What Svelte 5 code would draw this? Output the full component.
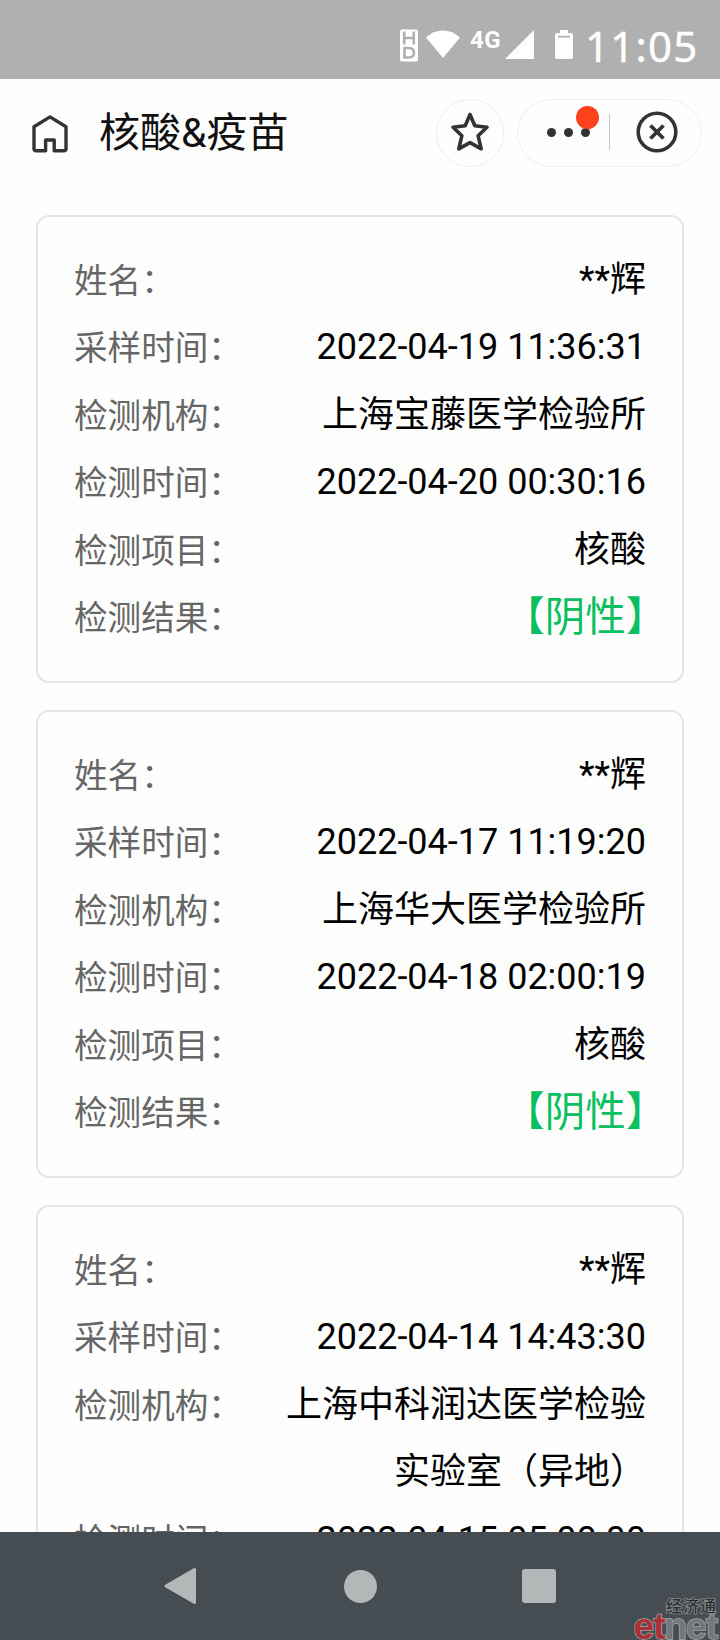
<script lang="ts">
  interface Report {
    name: string;
    sampled: string;
    agency: string;
    tested: string;
    item: string;
    result: string;
  }

  const reports: Report[] = [
    {
      name: '**辉',
      sampled: '2022-04-19 11:36:31',
      agency: '上海宝藤医学检验所',
      tested: '2022-04-20 00:30:16',
      item: '核酸',
      result: '阴性'
    },
    {
      name: '**辉',
      sampled: '2022-04-17 11:19:20',
      agency: '上海华大医学检验所',
      tested: '2022-04-18 02:00:19',
      item: '核酸',
      result: '阴性'
    },
    {
      name: '**辉',
      sampled: '2022-04-14 14:43:30',
      agency: '上海中科润达医学检验实验室（异地）',
      tested: '2022-04-15 05:00:00',
      item: '核酸',
      result: '阴性'
    }
  ];
</script>

<div class="screen">
  <div class="status-bar">
    <svg class="hd" width="18" height="33" viewBox="0 0 18 33">
      <rect width="18" height="32" y=".5" rx="2" fill="#fff" />
      <path d="M4.200 2.500v13M13.800 2.500v13M4.200 9h9.600M4.500 19v9.500h4q5.500 0 5.500-4.700T8.500 19z" fill="none" stroke="#b0b0b0" stroke-width="2.600" />
    </svg>
    <svg class="wifi" width="34" height="28" viewBox="0 0 34 28">
      <path d="M0 7.500Q7.500.5 17 .5t17 7L17 28z" fill="#fff" />
    </svg>
    <span class="network">4G</span>
    <svg class="signal" width="29" height="29" viewBox="0 0 29 29">
      <path d="M29 0v29H0z" fill="#fff" />
    </svg>
    <svg class="battery" width="18" height="29" viewBox="0 0 18 29">
      <path d="M5 0h8v3h3q2 0 2 2v22q0 2-2 2H2q-2 0-2-2V5q0-2 2-2h3z" fill="#fff" />
      <path d="M3 6.700h12" stroke="#b0b0b0" stroke-width="1.800" />
    </svg>
    <span class="clock">11:05</span>
  </div>

  <header>
    <svg class="home" width="36" height="38" viewBox="0 0 36 38" fill="none" stroke="#333" stroke-width="3.400" stroke-linejoin="round">
      <path d="M18 1.900 34 11.800V33.500q0 2.300-2.300 2.300H22.200V25H13.600V35.800H4.300Q2 35.800 2 33.500V11.800z" />
    </svg>
    <h1>核酸&amp;疫苗</h1>
    <button class="round" aria-label="收藏">
      <svg width="40" height="40" viewBox="0 0 40 40" fill="none" stroke="#333" stroke-width="3.600" stroke-linejoin="round">
        <path d="M20 2.500 24.800 13.800 37 15.300 28.100 23.700 31.200 36.800 20 30.700 8.800 36.800 11.900 23.700 3 15.300 15.200 13.800z" />
      </svg>
    </button>
    <div class="capsule">
      <span class="more">
        <i></i><i></i><i></i>
        <b class="badge"></b>
      </span>
      <span class="divider"></span>
      <svg class="close" width="42" height="42" viewBox="0 0 42 42" fill="none" stroke="#333">
        <circle cx="21" cy="21" r="18.800" stroke-width="3.600" />
        <path d="M14.500 14.500l13 13M27.500 14.500l-13 13" stroke-width="3.800" />
      </svg>
    </div>
  </header>

  <main>
    {#each reports as report}
      <section class="card">
        <div class="row"><span class="label">姓名：</span><span class="value">{report.name}</span></div>
        <div class="row"><span class="label">采样时间：</span><span class="value">{report.sampled}</span></div>
        <div class="row"><span class="label">检测机构：</span><span class="value">{report.agency}</span></div>
        <div class="row"><span class="label">检测时间：</span><span class="value">{report.tested}</span></div>
        <div class="row"><span class="label">检测项目：</span><span class="value">{report.item}</span></div>
        <div class="row"><span class="label">检测结果：</span><span class="value result">【{report.result}】</span></div>
      </section>
    {/each}
  </main>

  <nav>
    <svg width="36" height="40" viewBox="0 0 36 40">
      <path d="M32.500 3.500v33L4 20z" fill="#b3b7b8" stroke="#b3b7b8" stroke-width="3" stroke-linejoin="round" />
    </svg>
    <span class="nav-home"></span>
    <span class="nav-recent"></span>
    <div class="watermark">
      <span class="cn">经济通</span>
      <span class="en"><em>et</em>net</span>
    </div>
  </nav>
</div>

<style>
  :global(body) { margin: 0; background: #fefefe; }
  .screen {
    width: 720px;
    height: 1640px;
    display: flex;
    flex-direction: column;
    overflow: hidden;
    background: #fefefe;
    font-family: Roboto, "Noto Sans CJK SC", sans-serif;
    color: #000;
  }

  .status-bar {
    flex: none;
    height: 79px;
    box-sizing: border-box;
    padding: 29px 22px 0 0;
    display: flex;
    align-items: flex-start;
    justify-content: flex-end;
    background: #b0b0b0;
    color: #fff;
  }
  .status-bar svg { flex: none; }
  .wifi { margin: 1px 10px 0 8px; }
  .network { width: 31px; font-size: 24px; line-height: 24px; font-weight: 700; letter-spacing: 0.5px; margin-top: -1px; }
  .signal { margin: 1px 21px 0 4px; }
  .battery { margin: 1px 12px 0 0; }
  .clock { font: 42px/42px "Noto Sans", sans-serif; letter-spacing: 1.2px; width: 113px; margin-top: -4px; -webkit-text-stroke: 0.4px #fff; }

  header {
    flex: none;
    height: 106px;
    box-sizing: border-box;
    padding: 0 18px 0 32px;
    display: flex;
    align-items: center;
  }
  .home { margin-top: 4px; }
  h1 { flex: 1; margin: 1px 0 0 31px; font-size: 41px; line-height: 60px; font-weight: 400; color: #111; }
  .round {
    width: 68px;
    height: 68px;
    margin: 2px 0 0;
    padding: 0 0 2px;
    border: 1px solid #eee;
    border-radius: 50%;
    background: none;
    display: flex;
    align-items: center;
    justify-content: center;
  }
  .capsule {
    width: 185px;
    height: 68px;
    box-sizing: border-box;
    margin: 2px 0 0 13px;
    padding: 0 23px 2px 29px;
    border: 1px solid #eee;
    border-radius: 34px;
    display: flex;
    align-items: center;
  }
  .more { position: relative; display: flex; gap: 8px; }
  .more i { width: 9px; height: 9px; border-radius: 50%; background: #333; }
  .badge {
    position: absolute;
    left: 29px;
    top: -22px;
    width: 23px;
    height: 23px;
    border-radius: 50%;
    background: #ff411c;
  }
  .divider { width: 1px; height: 36px; margin-left: 19px; background: #c4c4c4; }
  .close { margin-left: auto; }

  main {
    flex: 1;
    min-height: 0;
    overflow: hidden;
    padding: 30px 36px 0;
  }
  .card {
    box-sizing: border-box;
    min-height: 468px;
    margin-bottom: 27px;
    padding: 29.5px 36px;
    border: 2px solid #e5e5e5;
    border-radius: 13px;
  }
  .row { display: flex; justify-content: space-between; line-height: 67.5px; }
  .label { flex: none; margin: 1px 0 -1px; font-size: 33.6px; color: #666; }
  .value { width: 360px; font-size: 36px; text-align: right; }
  .result { font-size: 40.5px; color: #0abf60; font-feature-settings: "halt"; }

  nav {
    position: relative;
    flex: none;
    height: 108px;
    box-sizing: border-box;
    padding: 0 164px 0 162px;
    display: flex;
    align-items: center;
    justify-content: space-between;
    background: #454d53;
  }
  .nav-home { width: 33px; height: 33px; border-radius: 50%; background: #b3b7b8; }
  .nav-recent { width: 34px; height: 34px; border-radius: 3px; background: #b3b7b8; }
  .watermark {
    position: absolute;
    right: 3px;
    bottom: 0;
    display: flex;
    flex-direction: column;
    align-items: flex-end;
  }
  .cn {
    font: 500 16px/18px "Noto Sans CJK SC", sans-serif;
    letter-spacing: 1px;
    color: #2e2e2e;
    -webkit-text-stroke: 1.5px #8a8e90;
    paint-order: stroke;
  }
  .en {
    font: 700 37px/26px "Liberation Sans", sans-serif;
    letter-spacing: -1px;
    color: #73787a;
    -webkit-text-stroke: 1.5px #a5a8a9;
    paint-order: stroke;
  }
  .en em { font-style: normal; color: #ab2f37; }
</style>
